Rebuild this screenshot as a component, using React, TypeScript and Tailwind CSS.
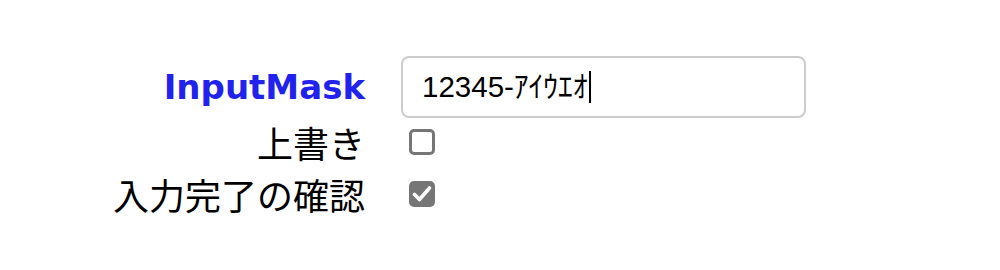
export default function App() {
  return (
    <div className="w-[1000px] h-[270px] bg-white pt-[56px]">
      <div className="grid grid-cols-[365px_405px] grid-rows-[62px_48px_56px] gap-x-[36px] items-center">
        {/* 1行目 */}
        <div className="text-right font-bold text-[34px] leading-none text-[#2222ee] font-['DejaVu_Sans',sans-serif]">
          InputMask
        </div>
        <div className="h-[62px] border-2 border-[#cccccc] rounded-[8px] flex items-center pl-[19px]">
          <span className="text-[29.5px] leading-none text-black font-['Liberation_Sans','Noto_Sans_CJK_JP',sans-serif]">
            12345-ｱｲｳｴｵ
          </span>
          <span className="inline-block w-[2px] h-[32px] bg-black ml-[1px]" />
        </div>

        {/* 2行目 */}
        <div className="text-right text-[36px] leading-none text-black font-['Noto_Sans_CJK_JP',sans-serif]">
          上書き
        </div>
        <div className="pl-[8px]">
          <div className="w-[26px] h-[26px] border-[3px] border-[#767676] rounded-[5px] bg-white" />
        </div>

        {/* 3行目 */}
        <div className="text-right text-[36px] leading-none text-black font-['Noto_Sans_CJK_JP',sans-serif]">
          入力完了の確認
        </div>
        <div className="pl-[8px]">
          <div className="w-[26px] h-[26px] rounded-[5px] bg-[#767676]">
            <svg width="26" height="26" viewBox="0 0 26 26" fill="none">
              <path d="M5.5 13.5 L10.5 18.5 L20.5 7" stroke="white" strokeWidth="3.6" strokeLinecap="round" strokeLinejoin="round" />
            </svg>
          </div>
        </div>
      </div>
    </div>
  )
}
